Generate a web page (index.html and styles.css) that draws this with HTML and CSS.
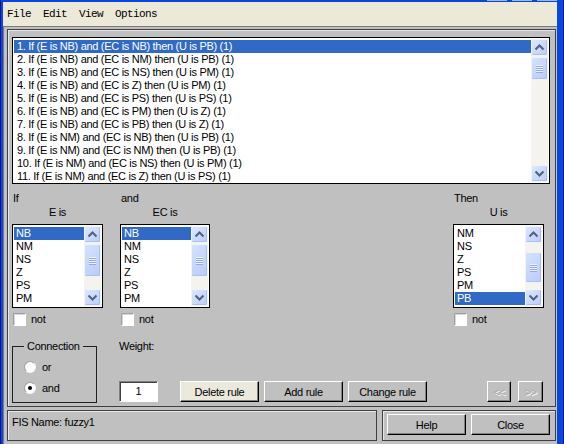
FILE: index.html
```html
<!DOCTYPE html>
<html>
<head>
<meta charset="utf-8">
<link rel="stylesheet" href="styles.css">
</head>
<body>
<div class="win">
  <div class="titleedge"><span class="tb"></span><span class="tb"></span><span class="tb"></span></div>
  <div class="menubar">
    <span class="mi">File</span><span class="mi">Edit</span><span class="mi">View</span><span class="mi">Options</span>
  </div>
  <div class="client">
    <div class="mainframe">
      <div class="listbox rules">
        <div class="items">
          <div class="item sel">1. If (E is NB) and (EC is NB) then (U is PB) (1)</div>
          <div class="item">2. If (E is NB) and (EC is NM) then (U is PB) (1)</div>
          <div class="item">3. If (E is NB) and (EC is NS) then (U is PM) (1)</div>
          <div class="item">4. If (E is NB) and (EC is Z) then (U is PM) (1)</div>
          <div class="item">5. If (E is NB) and (EC is PS) then (U is PS) (1)</div>
          <div class="item">6. If (E is NB) and (EC is PM) then (U is Z) (1)</div>
          <div class="item">7. If (E is NB) and (EC is PB) then (U is Z) (1)</div>
          <div class="item">8. If (E is NM) and (EC is NB) then (U is PB) (1)</div>
          <div class="item">9. If (E is NM) and (EC is NM) then (U is PB) (1)</div>
          <div class="item">10. If (E is NM) and (EC is NS) then (U is PM) (1)</div>
          <div class="item">11. If (E is NM) and (EC is Z) then (U is PS) (1)</div>
        </div>
        <div class="sb">
          <div class="sbbtn"><svg width="15" height="15" viewBox="0 0 15 15"><polyline points="3.5,9.5 7.5,5.5 11.5,9.5" fill="none" stroke="#4d6185" stroke-width="2"/></svg></div>
          <div class="track"><div class="thumb" style="margin-top:1px;height:23px"><span class="grip"></span></div></div>
          <div class="sbbtn"><svg width="15" height="15" viewBox="0 0 15 15"><polyline points="3.5,5.5 7.5,9.5 11.5,5.5" fill="none" stroke="#4d6185" stroke-width="2"/></svg></div>
        </div>
      </div>

      <div class="mid">
        <div class="col c1">
          <div class="lbl1">If</div>
          <div class="lbl2">E is</div>
          <div class="listbox small">
            <div class="items">
              <div class="item sel">NB</div>
              <div class="item">NM</div>
              <div class="item">NS</div>
              <div class="item">Z</div>
              <div class="item">PS</div>
              <div class="item">PM</div>
            </div>
            <div class="sb">
              <div class="sbbtn"><svg width="15" height="15" viewBox="0 0 15 15"><polyline points="3.5,9.5 7.5,5.5 11.5,9.5" fill="none" stroke="#4d6185" stroke-width="2"/></svg></div>
              <div class="track"><div class="thumb" style="margin-top:1px;height:33px"><span class="grip"></span></div></div>
              <div class="sbbtn"><svg width="15" height="15" viewBox="0 0 15 15"><polyline points="3.5,5.5 7.5,9.5 11.5,5.5" fill="none" stroke="#4d6185" stroke-width="2"/></svg></div>
            </div>
          </div>
          <div class="chk"><span class="box"></span><span class="ct">not</span></div>
        </div>
        <div class="col c2">
          <div class="lbl1">and</div>
          <div class="lbl2">EC is</div>
          <div class="listbox small">
            <div class="items">
              <div class="item sel">NB</div>
              <div class="item">NM</div>
              <div class="item">NS</div>
              <div class="item">Z</div>
              <div class="item">PS</div>
              <div class="item">PM</div>
            </div>
            <div class="sb">
              <div class="sbbtn"><svg width="15" height="15" viewBox="0 0 15 15"><polyline points="3.5,9.5 7.5,5.5 11.5,9.5" fill="none" stroke="#4d6185" stroke-width="2"/></svg></div>
              <div class="track"><div class="thumb" style="margin-top:1px;height:33px"><span class="grip"></span></div></div>
              <div class="sbbtn"><svg width="15" height="15" viewBox="0 0 15 15"><polyline points="3.5,5.5 7.5,9.5 11.5,5.5" fill="none" stroke="#4d6185" stroke-width="2"/></svg></div>
            </div>
          </div>
          <div class="chk"><span class="box"></span><span class="ct">not</span></div>
        </div>
        <div class="col c3">
          <div class="lbl1">Then</div>
          <div class="lbl2">U is</div>
          <div class="listbox small">
            <div class="items">
              <div class="item">NM</div>
              <div class="item">NS</div>
              <div class="item">Z</div>
              <div class="item">PS</div>
              <div class="item">PM</div>
              <div class="item sel">PB</div>
            </div>
            <div class="sb">
              <div class="sbbtn"><svg width="15" height="15" viewBox="0 0 15 15"><polyline points="3.5,9.5 7.5,5.5 11.5,9.5" fill="none" stroke="#4d6185" stroke-width="2"/></svg></div>
              <div class="track"><div class="thumb" style="margin-top:9px;height:31px"><span class="grip"></span></div></div>
              <div class="sbbtn"><svg width="15" height="15" viewBox="0 0 15 15"><polyline points="3.5,5.5 7.5,9.5 11.5,5.5" fill="none" stroke="#4d6185" stroke-width="2"/></svg></div>
            </div>
          </div>
          <div class="chk"><span class="box"></span><span class="ct">not</span></div>
        </div>
      </div>

      <div class="bottomrow">
        <fieldset class="conn">
          <legend>Connection</legend>
          <div class="radiorow"><span class="radio"></span><span>or</span></div>
          <div class="radiorow"><span class="radio on"></span><span>and</span></div>
        </fieldset>
        <div class="weight">
          <div class="wlabel">Weight:</div>
          <div class="edit">1</div>
        </div>
        <div class="btns">
          <div class="btn light">Delete rule</div>
          <div class="btn">Add rule</div>
          <div class="btn">Change rule</div>
        </div>
        <div class="nav">
          <div class="btn dis small1">&lt;&lt;</div>
          <div class="btn dis small2">&gt;&gt;</div>
        </div>
      </div>
    </div>

    <div class="status">
      <div class="fisbox">FIS Name: fuzzy1</div>
      <div class="helpbox">
        <div class="btn">Help</div>
        <div class="btn">Close</div>
      </div>
    </div>
  </div>
</div>
</body>
</html>
```

FILE: styles.css
```css
* { box-sizing: border-box; }
html, body { margin: 0; padding: 0; }
body {
  width: 564px;
  height: 444px;
  overflow: hidden;
  background: #0846dd;
  font-family: "Liberation Sans", Arial, sans-serif;
  font-size: 11px;
  letter-spacing: -0.3px;
  color: #000;
}
.win {
  width: 564px;
  height: 444px;
  display: flex;
  flex-direction: column;
  padding: 0 7px 0 3px;
  background: #0846dd;
  box-shadow: inset 1px 0 0 #00138c, inset -1px 0 0 #00138c;
}
.titleedge {
  height: 2px;
  display: flex;
  justify-content: flex-end;
  gap: 5px;
}
.tb {
  width: 20px;
  height: 1px;
  background: #9fb8f0;
}
.menubar {
  height: 24px;
  background: #ece9d8;
  display: flex;
  align-items: center;
  font-family: "Liberation Mono", "Courier New", monospace;
  font-size: 11px;
  letter-spacing: -0.6px;
}
.mi { width: 36px; padding-left: 4px; white-space: nowrap; }

.client {
  flex: 1;
  background: #c0c0c0;
  border-top: 1px solid #7a7a7a;
  border-left: 1px solid #7a7a7a;
  padding: 2px 1px 0 3px;
  display: flex;
  flex-direction: column;
}
.mainframe {
  height: 378px;
  border: 1px solid #404040;
  box-shadow: inset 1px 1px 0 #e8e8e8;
  display: flex;
  flex-direction: column;
}

/* list boxes */
.listbox {
  background: #fff;
  border: 1px solid #000;
  display: flex;
  padding-left: 1px;
  overflow: hidden;
}
.items {
  flex: 1;
  padding-top: 2px;
  overflow: hidden;
}
.item {
  height: 13px;
  line-height: 13px;
  padding-left: 3px;
  white-space: nowrap;
}
.small .item { padding-left: 2px; }
.item.sel { background: #316ac5; color: #fff; }
.rules {
  margin: 7px 0 0 4px;
  width: 538px;
  height: 147px;
}
.sb {
  width: 17px;
  margin: 1px 1px 1px 0;
  display: flex;
  flex-direction: column;
  background: #f4f3ee;
}
.sbbtn {
  height: 17px;
  flex: none;
  border: 1px solid #eef3fe;
  border-radius: 2px;
  background: linear-gradient(135deg, #dde8fe, #bacdf8);
  box-shadow: inset -1px -1px 0 #a9bff1;
  display: flex;
  align-items: center;
  justify-content: center;
}
.sbbtn svg { display: block; }
.track { flex: 1; }
.thumb {
  border: 1px solid #eef3fe;
  border-radius: 2px;
  background: linear-gradient(135deg, #d6e2fd, #b8ccf8);
  box-shadow: inset -1px -1px 0 #a9bff1;
  display: flex;
  align-items: center;
  justify-content: center;
}
.grip {
  width: 7px;
  height: 8px;
  background: repeating-linear-gradient(#eef3fe 0 1px, #8eaaf0 1px 2px);
}

/* middle */
.mid {
  margin-top: 7px;
  display: flex;
  padding: 0 11px 0 4px;
}
.col { display: flex; flex-direction: column; }
.c1 { width: 91px; }
.c2 { width: 90px; margin-left: 17px; }
.c3 { width: 91px; margin-left: auto; }
.lbl1 { height: 14px; line-height: 14px; padding-left: 1px; white-space: nowrap; }
.lbl2 { height: 14px; line-height: 14px; text-align: center; white-space: nowrap; }
.small { margin-top: 5px; height: 84px; }
.chk {
  margin-top: 5px;
  height: 13px;
  display: flex;
  align-items: center;
  gap: 5px;
  padding-left: 1px;
}
.ct { line-height: 13px; }
.box {
  width: 13px;
  height: 13px;
  background: #fff;
  border: 1px solid;
  border-color: #a0a0a0 #fff #fff #a0a0a0;
  box-shadow: inset 1px 1px 0 #d8d8d8;
}

/* bottom row */
.bottomrow {
  margin-top: 13px;
  height: 64px;
  display: flex;
  align-items: flex-end;
  padding: 0 12px 0 4px;
}
.conn {
  margin: 0;
  width: 85px;
  height: 64px;
  align-self: flex-start;
  border: 1px solid #202020;
  padding: 0 0 0 11px;
  min-width: 0;
}
.conn legend {
  padding: 0 3px;
  line-height: 14px;
  height: 14px;
}
.radiorow {
  height: 21px;
  display: flex;
  align-items: center;
  gap: 6px;
}
.radiorow:first-of-type { margin-top: 3px; }
.radio {
  width: 12px;
  height: 12px;
  border-radius: 50%;
  background: #fff;
  border: 1px solid;
  border-color: #a0a0a0 #f4f4f4 #f4f4f4 #a0a0a0;
  display: flex;
  align-items: center;
  justify-content: center;
}
.radio.on::after {
  content: "";
  width: 4px;
  height: 4px;
  border-radius: 50%;
  background: #000;
}
.weight {
  margin-left: 22px;
  width: 39px;
  height: 64px;
  display: flex;
  flex-direction: column;
  justify-content: space-between;
}
.wlabel { line-height: 14px; height: 14px; white-space: nowrap; }
.edit {
  height: 21px;
  margin-bottom: 1px;
  background: #fff;
  border: 1px solid;
  border-color: #808080 #fff #fff #808080;
  box-shadow: inset 1px 1px 0 #404040;
  text-align: center;
  line-height: 18px;
}
.btns {
  margin-left: 22px;
  margin-bottom: 1px;
  display: flex;
  gap: 5px;
}
.btn {
  width: 79px;
  height: 21px;
  background: #c0c0c0;
  border: 1px solid;
  border-color: #fff #000 #000 #fff;
  box-shadow: inset -1px -1px 0 #808080;
  display: flex;
  align-items: center;
  justify-content: center;
  white-space: nowrap;
}
.btn.light { background: #ebe8dc; }
.nav {
  margin-left: auto;
  margin-bottom: 1px;
  display: flex;
  gap: 7px;
}
.btn.dis {
  color: #a8a8a8;
  text-shadow: 1px 1px 0 #fff;
  letter-spacing: -1px;
}
.small1 { width: 24px; }
.small2 { width: 25px; }

/* status row */
.status {
  margin-top: 3px;
  display: flex;
  gap: 5px;
  height: 31px;
}
.fisbox {
  width: 370px;
  border: 1px solid #404040;
  box-shadow: inset 1px 1px 0 #e8e8e8;
  padding: 4px 0 0 4px;
  line-height: 14px;
}
.helpbox {
  width: 174px;
  border: 1px solid #404040;
  box-shadow: inset 1px 1px 0 #e8e8e8;
  padding: 3px 0 0 4px;
  display: flex;
  gap: 5px;
}
```
